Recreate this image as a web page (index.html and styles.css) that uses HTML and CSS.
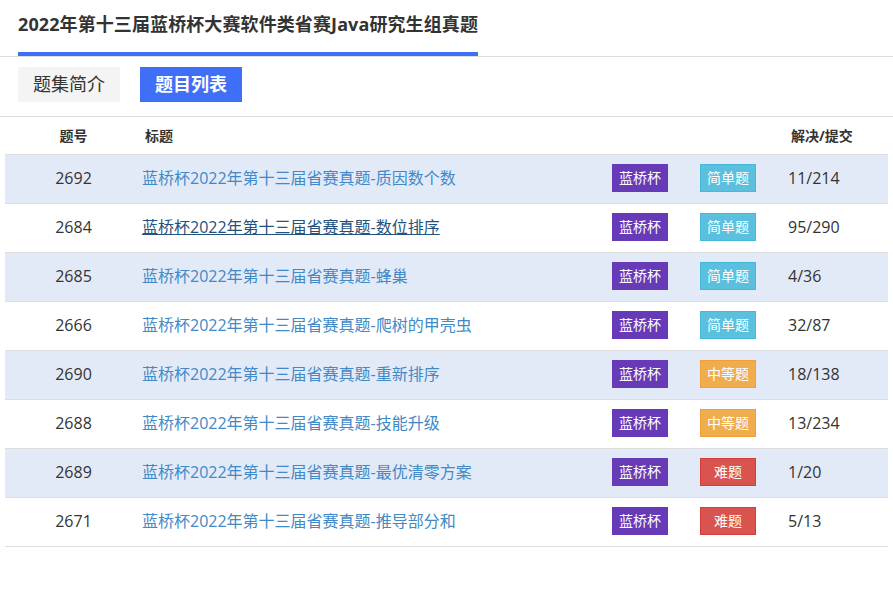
FILE: index.html
```html
<!DOCTYPE html>
<html lang="zh-CN">
<head>
<meta charset="utf-8">
<link rel="stylesheet" href="styles.css">
</head>
<body>
<div class="header">
  <div class="title-tab">2022年第十三届蓝桥杯大赛软件类省赛Java研究生组真题</div>
</div>
<div class="tabs">
  <div class="tab">题集简介</div>
  <div class="tab active">题目列表</div>
</div>
<div class="table">
  <div class="row head">
    <div class="c-id">题号</div>
    <div class="c-title">标题</div>
    <div></div>
    <div></div>
    <div class="c-count">解决/提交</div>
  </div>
  <div class="row odd">
    <div class="c-id">2692</div>
    <div class="c-title"><a class="link">蓝桥杯2022年第十三届省赛真题-质因数个数</a></div>
    <div><span class="badge purple">蓝桥杯</span></div>
    <div><span class="badge info">简单题</span></div>
    <div class="c-count">11/214</div>
  </div>
  <div class="row">
    <div class="c-id">2684</div>
    <div class="c-title"><a class="link hover">蓝桥杯2022年第十三届省赛真题-数位排序</a></div>
    <div><span class="badge purple">蓝桥杯</span></div>
    <div><span class="badge info">简单题</span></div>
    <div class="c-count">95/290</div>
  </div>
  <div class="row odd">
    <div class="c-id">2685</div>
    <div class="c-title"><a class="link">蓝桥杯2022年第十三届省赛真题-蜂巢</a></div>
    <div><span class="badge purple">蓝桥杯</span></div>
    <div><span class="badge info">简单题</span></div>
    <div class="c-count">4/36</div>
  </div>
  <div class="row">
    <div class="c-id">2666</div>
    <div class="c-title"><a class="link">蓝桥杯2022年第十三届省赛真题-爬树的甲壳虫</a></div>
    <div><span class="badge purple">蓝桥杯</span></div>
    <div><span class="badge info">简单题</span></div>
    <div class="c-count">32/87</div>
  </div>
  <div class="row odd">
    <div class="c-id">2690</div>
    <div class="c-title"><a class="link">蓝桥杯2022年第十三届省赛真题-重新排序</a></div>
    <div><span class="badge purple">蓝桥杯</span></div>
    <div><span class="badge warn">中等题</span></div>
    <div class="c-count">18/138</div>
  </div>
  <div class="row">
    <div class="c-id">2688</div>
    <div class="c-title"><a class="link">蓝桥杯2022年第十三届省赛真题-技能升级</a></div>
    <div><span class="badge purple">蓝桥杯</span></div>
    <div><span class="badge warn">中等题</span></div>
    <div class="c-count">13/234</div>
  </div>
  <div class="row odd">
    <div class="c-id">2689</div>
    <div class="c-title"><a class="link">蓝桥杯2022年第十三届省赛真题-最优清零方案</a></div>
    <div><span class="badge purple">蓝桥杯</span></div>
    <div><span class="badge danger">难题</span></div>
    <div class="c-count">1/20</div>
  </div>
  <div class="row last">
    <div class="c-id">2671</div>
    <div class="c-title"><a class="link">蓝桥杯2022年第十三届省赛真题-推导部分和</a></div>
    <div><span class="badge purple">蓝桥杯</span></div>
    <div><span class="badge danger">难题</span></div>
    <div class="c-count">5/13</div>
  </div>
</div>
</body>
</html>
```
FILE: styles.css
```css
* { box-sizing: border-box; }
body {
  margin: 0;
  background: #fff;
  font-family: "Open Sans", "Noto Sans CJK SC", sans-serif;
  color: #333;
}
.header {
  display: flex;
  border-bottom: 1px solid #ddd;
}
.title-tab {
  margin-left: 18px;
  height: 56px;
  padding-top: 10px;
  font-size: 18px;
  line-height: 28px;
  font-weight: bold;
  color: #333;
  letter-spacing: 0.1px;
  border-bottom: 4px solid #3f6ff6;
}
.tabs {
  display: flex;
  gap: 20px;
  padding: 10px 18px 14px;
  border-bottom: 1px solid #ddd;
}
.tab {
  height: 35px;
  padding: 0 15px;
  font-size: 18px;
  line-height: 35px;
  background: #f4f4f4;
  color: #333;
}
.tab.active {
  background: #3f6ff6;
  color: #fff;
  font-weight: bold;
}
.table {
  margin: 0 5px;
}
.row {
  display: grid;
  grid-template-columns: 137px 470px 88px 88px 1fr;
  align-items: center;
  height: 49px;
  padding-bottom: 2px;
  border-top: 1px solid #ddd;
  font-size: 16px;
  line-height: 22px;
}
.row.head {
  height: 37px;
  padding-bottom: 0;
  border-top: none;
  font-size: 14px;
  font-weight: bold;
  color: #333;
}
.row.head .c-title, .row.head .c-count { padding-left: 3px; }
.row.odd { background: #e3eaf7; }
.row.last { border-bottom: 1px solid #ddd; height: 50px; }
.c-id { text-align: center; }
.link {
  color: #4189c7;
  text-decoration: none;
}
.link.hover {
  color: #23527c;
  text-decoration: underline;
}
.badge {
  display: inline-block;
  width: 56px;
  height: 28px;
  line-height: 26px;
  text-align: center;
  font-size: 14px;
  color: #fff;
  border: 1px solid;
  vertical-align: middle;
}
.purple { background: #673ab7; border-color: #673ab7; }
.info { background: #5bc0de; border-color: #46b8da; }
.warn { background: #f0ad4e; border-color: #eea236; }
.danger { background: #d9534f; border-color: #d43f3a; }
```
